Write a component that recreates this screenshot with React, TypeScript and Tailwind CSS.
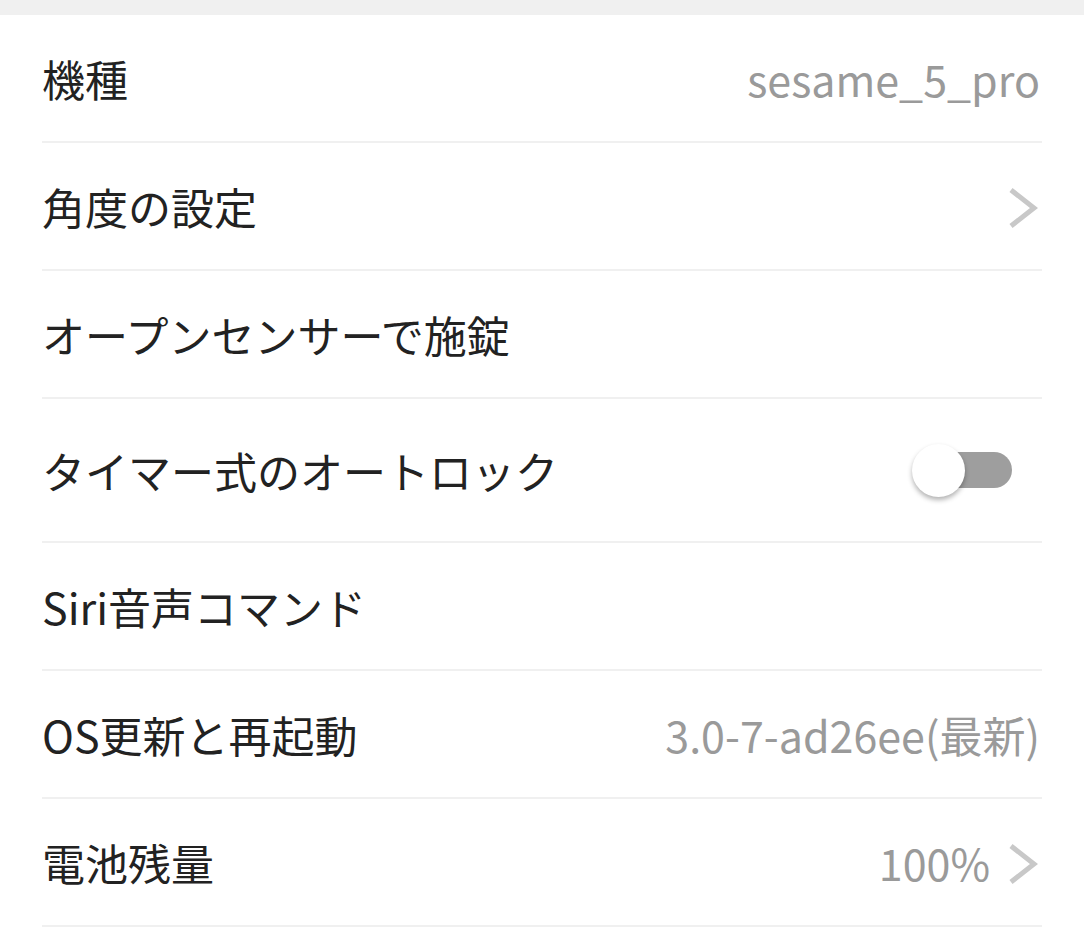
import React from "react"

const font = { fontFamily: '"Noto Sans CJK JP", "Noto Sans", sans-serif' }

function Chevron() {
  return (
    <svg width="30" height="42" viewBox="0 0 30 42" className="shrink-0 mr-[4px] mt-[4px]">
      <polyline points="3,3 26,21 3,39" fill="none" stroke="#c8c8c8" strokeWidth="5" />
    </svg>
  )
}

function Toggle() {
  return (
    <div className="relative w-[100px] h-[56px] mr-[30px]">
      <div className="absolute left-[14px] right-0 top-[10px] h-[36px] rounded-full bg-[#9e9e9e]" />
      <div className="absolute left-0 top-[2px] w-[53px] h-[53px] rounded-full bg-white shadow-[0_3px_5px_rgba(0,0,0,0.3)]" />
    </div>
  )
}

type Row = {
  label: string
  value?: string
  chevron?: boolean
  toggle?: boolean
}

const rows: Row[] = [
  { label: "機種", value: "sesame_5_pro" },
  { label: "角度の設定", chevron: true },
  { label: "オープンセンサーで施錠" },
  { label: "タイマー式のオートロック", toggle: true },
  { label: "Siri音声コマンド" },
  { label: "OS更新と再起動", value: "3.0-7-ad26ee(最新)" },
  { label: "電池残量", value: "100%", chevron: true },
]

export default function App() {
  return (
    <div className="w-[1084px] h-[930px] bg-white overflow-hidden" style={font}>
      <div className="h-[15px] bg-[#f0f0f0]" />
      <div className="px-[42px]">
        {rows.map((r) => (
          <div
            key={r.label}
            className={`flex items-center justify-between border-b-2 border-[#f0f0f0] ${r.toggle ? "h-[144px]" : "h-[128px]"}`}
          >
            <span className="text-[43px] leading-none text-[#222222]">{r.label}</span>
            <div className="flex items-center gap-[18px]">
              {r.value && (
                <span className={`text-[43px] leading-none text-[#9a9a9a] ${r.chevron ? "" : "mr-[2px]"}`}>{r.value}</span>
              )}
              {r.chevron && <Chevron />}
              {r.toggle && <Toggle />}
            </div>
          </div>
        ))}
      </div>
    </div>
  )
}
